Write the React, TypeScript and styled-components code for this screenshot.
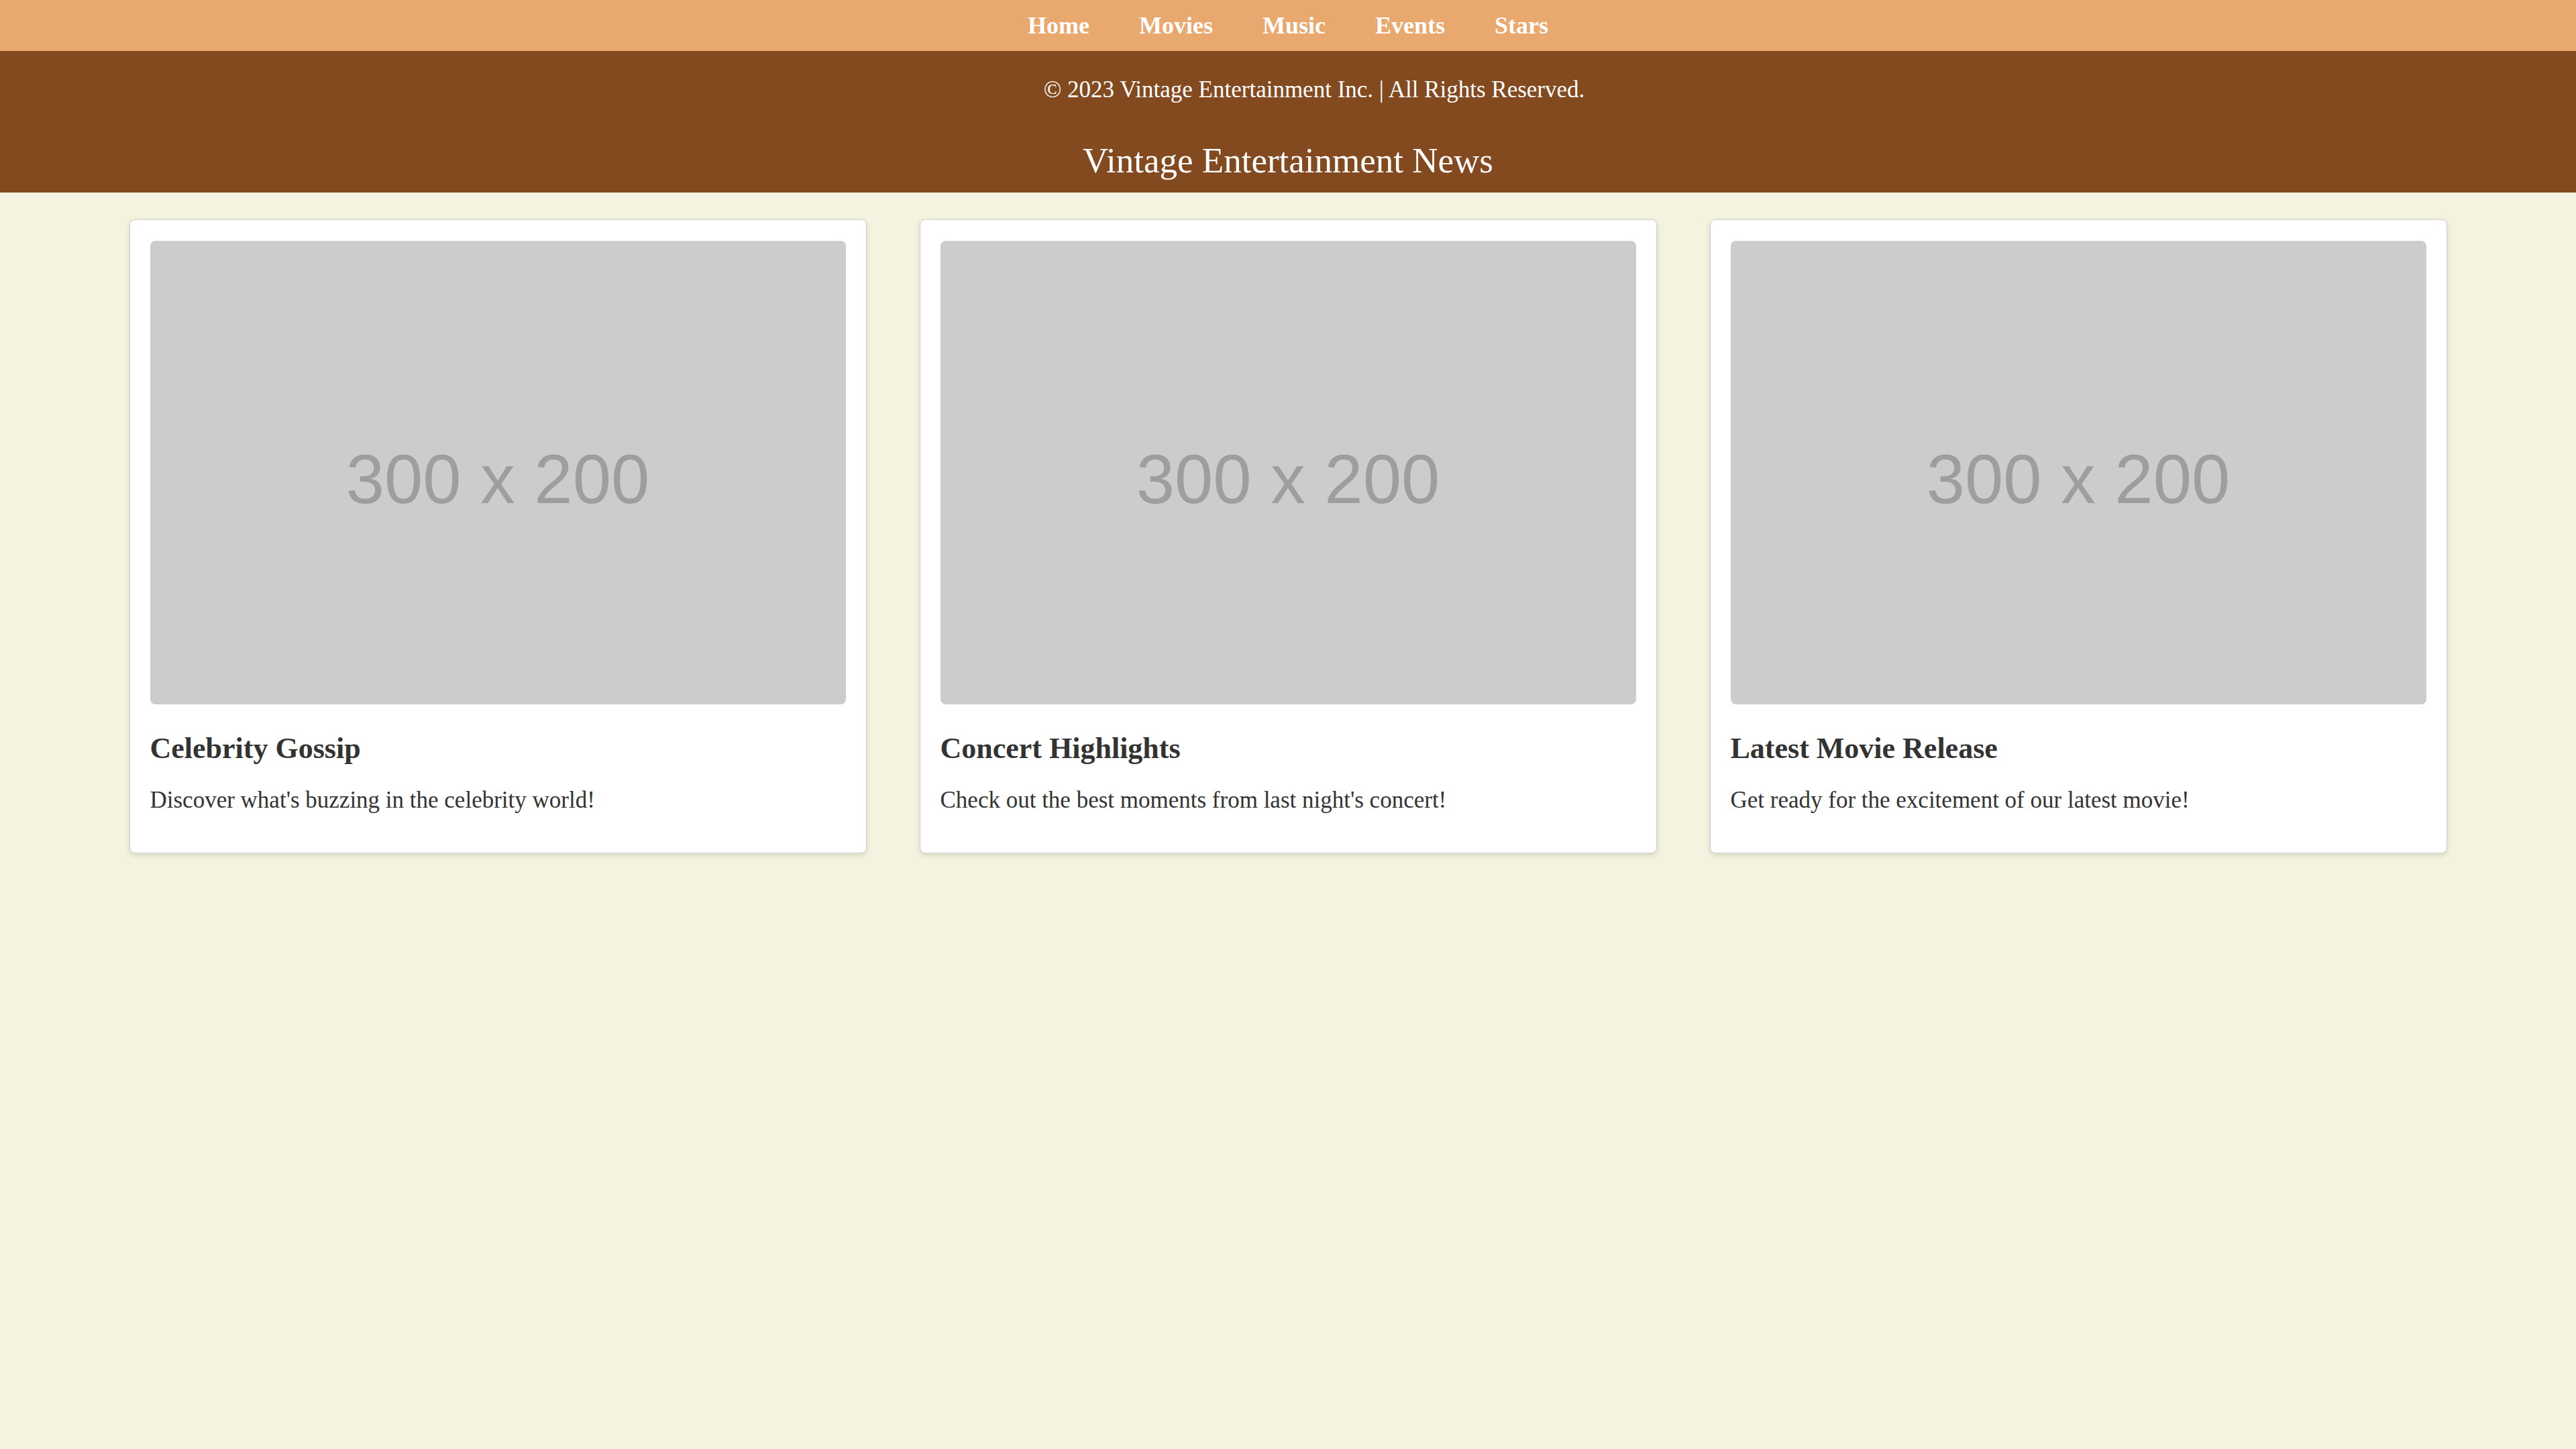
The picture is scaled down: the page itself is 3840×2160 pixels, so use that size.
import React from "react";
import styled, { createGlobalStyle } from "styled-components";

const GlobalStyle = createGlobalStyle`
  html, body {
    margin: 0;
    padding: 0;
    background: #f4f3df;
    font-family: "Liberation Serif", "Times New Roman", serif;
  }
  * { box-sizing: border-box; }
`;

const Page = styled.div`
  min-height: 2160px;
  background: #f4f3df;
`;

const NavBar = styled.nav`
  height: 76px;
  background: #e9a86d;
  display: flex;
  justify-content: center;
  align-items: center;
  gap: 74px;
`;

const NavLink = styled.a`
  font-size: 36px;
  font-weight: 700;
  line-height: 74px;
  color: #ffffff;
  text-decoration: none;
`;

const Header = styled.header`
  background: #834a20;
  color: #ffffff;
  padding: 38px 0 18px;
  display: flex;
  flex-direction: column;
  align-items: center;
  gap: 55px;
`;

const Copyright = styled.p`
  margin: 0;
  padding-left: 78px;
  font-size: 35px;
  line-height: 40px;
`;

const Title = styled.h1`
  margin: 0;
  font-size: 53px;
  font-weight: 400;
  line-height: 60px;
`;

const Grid = styled.main`
  display: grid;
  grid-template-columns: repeat(3, 1099px);
  justify-content: center;
  gap: 79px;
  padding: 40px 0;
`;

const Card = styled.article`
  background: #ffffff;
  border: 1px solid #cfcfcf;
  border-radius: 8px;
  box-shadow: 0 3px 8px rgba(0, 0, 0, 0.12);
  padding: 31px 30px 58px;
  display: flex;
  flex-direction: column;
`;

const Placeholder = styled.div`
  width: 100%;
  aspect-ratio: 3 / 2;
  background: #cccccc;
  border-radius: 8px;
  display: flex;
  align-items: center;
  justify-content: center;
  padding-top: 20px;
  font-family: "Liberation Sans", Arial, sans-serif;
  font-size: 103px;
  color: #9e9e9e;
`;

const CardTitle = styled.h3`
  margin: 41px 0 0;
  font-size: 44px;
  font-weight: 700;
  line-height: 50px;
  color: #333333;
`;

const CardText = styled.p`
  margin: 32px 0 0;
  font-size: 35px;
  line-height: 40px;
  color: #333333;
`;

const links = ["Home", "Movies", "Music", "Events", "Stars"];

const cards = [
  { title: "Celebrity Gossip", text: "Discover what's buzzing in the celebrity world!" },
  { title: "Concert Highlights", text: "Check out the best moments from last night's concert!" },
  { title: "Latest Movie Release", text: "Get ready for the excitement of our latest movie!" },
];

export default function App() {
  return (
    <Page>
      <GlobalStyle />
      <NavBar>
        {links.map((l) => (
          <NavLink key={l} href="#">
            {l}
          </NavLink>
        ))}
      </NavBar>
      <Header>
        <Copyright>© 2023 Vintage Entertainment Inc. | All Rights Reserved.</Copyright>
        <Title>Vintage Entertainment News</Title>
      </Header>
      <Grid>
        {cards.map((c) => (
          <Card key={c.title}>
            <Placeholder>300 x 200</Placeholder>
            <CardTitle>{c.title}</CardTitle>
            <CardText>{c.text}</CardText>
          </Card>
        ))}
      </Grid>
    </Page>
  );
}
